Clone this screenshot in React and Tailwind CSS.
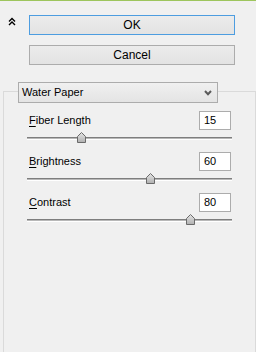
import React from 'react';

const font = { fontFamily: '"Liberation Sans", Arial, sans-serif' };

// slider settings: label, mnemonic split, value, range
const sliders = [
  { id: 'fiber', key: 'F', rest: 'iber Length', value: 15, min: 3, max: 50 },
  { id: 'bright', key: 'B', rest: 'rightness', value: 60, min: 0, max: 100 },
  { id: 'contrast', key: 'C', rest: 'ontrast', value: 80, min: 0, max: 100 },
];

const Thumb = () => (
  <svg width="9" height="11" viewBox="0 0 9 11">
    <defs>
      <linearGradient id="thumbFill" x1="0" y1="0" x2="0" y2="1">
        <stop offset="0" stopColor="#e4e4e4" />
        <stop offset="1" stopColor="#b0b0b0" />
      </linearGradient>
    </defs>
    <path
      d="M4.5 0.5 L8.5 4.5 L8.5 10.5 L0.5 10.5 L0.5 4.5 Z"
      fill="url(#thumbFill)"
      stroke="#6a6a6a"
      strokeWidth="1"
    />
  </svg>
);

const SliderRow = ({ item }) => {
  // track spans 200px, thumb center starts 3px in
  const frac = (item.value - item.min) / (item.max - item.min);
  const left = 3 + frac * 200 - 4.5;

  return (
    <div className="flex flex-col">
      <div className="flex items-center justify-between pl-[25px] pr-[24px]">
        <span className="text-[11px] text-black">
          <span className="underline underline-offset-2">{item.key}</span>
          {item.rest}
        </span>
        <div className="flex h-[19px] w-[32px] items-center border border-[#acacac] bg-white pl-[4px] text-[11px] text-black">
          {item.value}
        </div>
      </div>
      <div className="relative ml-[23px] h-[22px] w-[205px]">
        <div className="absolute left-0 right-0 top-[7px] h-[3px] border-t border-b border-t-[#7e7e7e] border-b-[#ffffff] bg-[#b8b8b8]" />
        <div className="absolute top-[2px]" style={{ left }}>
          <Thumb />
        </div>
      </div>
    </div>
  );
};

const App = () => {
  return (
    <div
      className="relative h-[352px] w-[256px] overflow-hidden bg-[#f0f0f0]"
      style={font}
    >
      <div className="h-px bg-[#9dc55d]" />

      <div className="mt-[14px] flex items-start">
        <div className="w-[29px] pl-[8px] pt-[2px]">
          <svg width="8" height="9" viewBox="0 0 8 9">
            <path
              d="M1 4.5 L4 1.5 L7 4.5 M1 8 L4 5 L7 8"
              fill="none"
              stroke="#000"
              strokeWidth="1.4"
            />
          </svg>
        </div>
        <div className="flex w-[206px] flex-col gap-[10px]">
          <button className="flex h-[20px] items-center justify-center border border-[#4d9de0] bg-gradient-to-b from-[#ececec] to-[#e3e3e3] text-[12px] text-black">
            OK
          </button>
          <button className="flex h-[20px] items-center justify-center border border-[#acacac] bg-gradient-to-b from-[#ececec] to-[#e3e3e3] text-[12px] text-black">
            Cancel
          </button>
        </div>
      </div>

      {/* group box with the preset dropdown as its caption */}
      <div className="ml-[3px] mt-[26px] h-[300px] w-[253px] border border-[#dadada]">
        <div className="-mt-[10px] ml-[14px] flex h-[21px] w-[200px] items-center justify-between border border-[#acacac] bg-gradient-to-b from-[#f0f0f0] to-[#e4e4e4] pl-[3px] pr-[5px]">
          <span className="text-[11px] text-black">Water Paper</span>
          <svg width="8" height="6" viewBox="0 0 8 6">
            <path
              d="M1 1 L4 4.2 L7 1"
              fill="none"
              stroke="#5a5a5a"
              strokeWidth="2"
            />
          </svg>
        </div>
        <div className="mt-[8px] flex flex-col">
          {sliders.map((s) => (
            <SliderRow key={s.id} item={s} />
          ))}
        </div>
      </div>
    </div>
  );
};

export default App;
